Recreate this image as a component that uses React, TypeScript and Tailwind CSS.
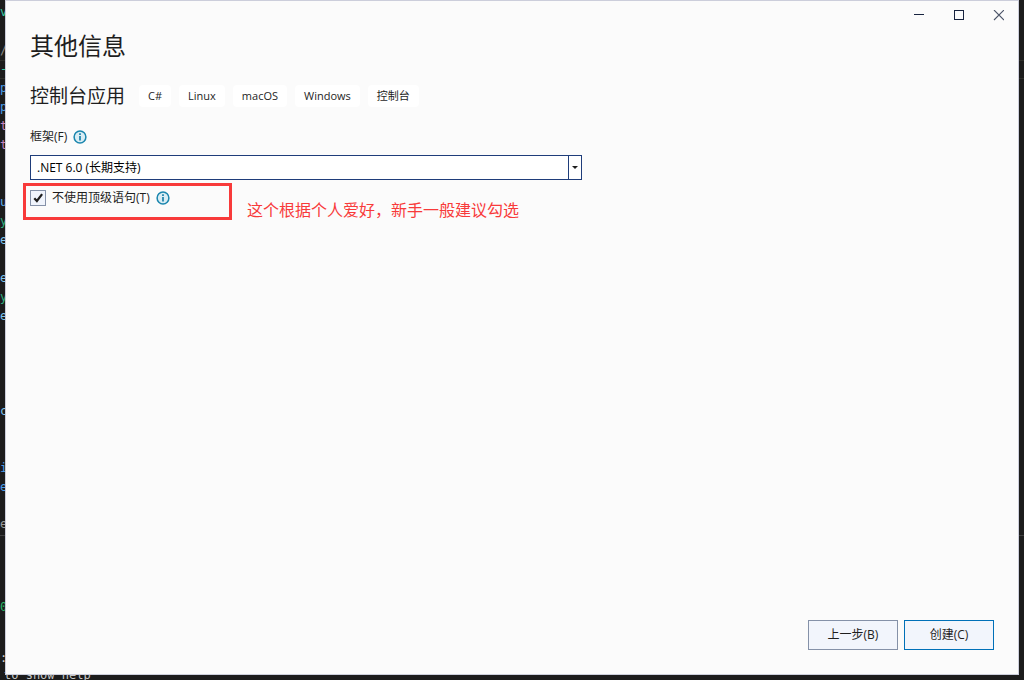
import { useState } from 'react';

const tags = ['C#', 'Linux', 'macOS', 'Windows', '控制台'];

// One entry per editor row, empty rows included
const editorRows: Array<{ text: string; color: string; active?: boolean }> = [
  { text: 'v', color: 'text-[#35c9a5]' },
  { text: '', color: '' },
  { text: '/', color: 'text-[#8a8a8a]' },
  { text: '-', color: 'text-[#35c9a5]', active: true },
  { text: 'p', color: 'text-[#4a9be8]' },
  { text: 'p', color: 'text-[#4a9be8]' },
  { text: 't', color: 'text-[#c583c0]' },
  { text: 't', color: 'text-[#c583c0]' },
  { text: '', color: '' },
  { text: '', color: '' },
  { text: 'u', color: 'text-[#5cb0f0]' },
  { text: 'y', color: 'text-[#2fae80]' },
  { text: 'e', color: 'text-[#7fc4ee]' },
  { text: '', color: '' },
  { text: 'e', color: 'text-[#7fc4ee]' },
  { text: 'y', color: 'text-[#2fae80]' },
  { text: 'e', color: 'text-[#7fc4ee]' },
  { text: '', color: '' },
  { text: '', color: '' },
  { text: '', color: '' },
  { text: '', color: '' },
  { text: 'c', color: 'text-[#7fc4ee]' },
  { text: '', color: '' },
  { text: '', color: '' },
  { text: 'i', color: 'text-[#4a9be8]' },
  { text: 'e', color: 'text-[#4a9be8]' },
];

function InfoIcon() {
  return (
    <svg width="14" height="14" viewBox="0 0 14 14" fill="none" aria-hidden="true">
      <circle cx="7" cy="7" r="5.9" fill="#d9edf4" stroke="#1a86ae" strokeWidth="1.5" />
      <path d="M7 3.2v1.7M7 6v4.6" stroke="#1a7fa8" strokeWidth="1.7" />
    </svg>
  );
}

function Editor() {
  return (
    <div className="flex h-full flex-col overflow-hidden bg-[#1c1c1c] pt-[3px] font-['DejaVu_Sans_Mono',monospace] text-[12px] leading-[19px]">
      {editorRows.map((row, i) => (
        <div
          key={i}
          className={`h-[19px] shrink-0 ${row.color} ${row.active ? 'border-y border-[#2e2e2a] leading-[17px]' : ''}`}
        >
          {row.text}
        </div>
      ))}
      <div className="mt-[18px] h-[21px] shrink-0 border-b border-[#3f3f3f] text-[#9a9a9a]">er</div>
      <div className="mt-[62px] shrink-0 text-[#27b566]">0</div>
      <div className="mt-8 h-[17px] shrink-0 text-[#d0d0d0]">:</div>
      <div className="h-[19px] shrink-0 pl-1 text-[#c8c8c8]">to show help</div>
    </div>
  );
}

function WindowControls() {
  return (
    <div className="flex h-[30px] shrink-0 justify-end">
      <button aria-label="最小化" className="flex w-10 items-center justify-center">
        <svg width="12" height="12" viewBox="0 0 12 12">
          <rect x="2" y="4" width="10" height="1" fill="#17233f" />
        </svg>
      </button>
      <button aria-label="最大化" className="flex w-10 items-center justify-center">
        <svg width="12" height="12" viewBox="0 0 12 12" fill="none">
          <rect x="2.5" y="0.5" width="9" height="9" stroke="#17233f" />
        </svg>
      </button>
      <button aria-label="关闭" className="flex w-10 items-center justify-center">
        <svg width="12" height="12" viewBox="0 0 12 12" fill="none">
          <path d="M2 0l10 10M12 0L2 10" stroke="#4b5468" strokeWidth="1.1" />
        </svg>
      </button>
    </div>
  );
}

export default function App() {
  const [framework, setFramework] = useState('net6');
  const [noTopLevel, setNoTopLevel] = useState(true);

  return (
    <div className="relative h-screen overflow-hidden">
      <Editor />

      <main className="absolute top-0 right-[5px] bottom-[5px] left-[5px] flex flex-col border border-[#cccedb] bg-[#fbfbfb] font-['Open_Sans','Noto_Sans_CJK_SC',sans-serif] text-[12px] text-[#1e1e1e]">
        <WindowControls />

        <div className="flex-1 px-6">
          <h1 className="text-[24px] leading-[30px]">其他信息</h1>

          <div className="mt-[19px] flex items-center gap-[14px]">
            <h2 className="text-[19px] leading-[32px]">控制台应用</h2>
            <ul className="flex gap-2">
              {tags.map((tag) => (
                <li key={tag} className="rounded bg-white px-[9px] text-[11px] leading-[22px]">
                  {tag}
                </li>
              ))}
            </ul>
          </div>

          {/* Framework */}
          <div className="mt-[15px] flex items-center gap-[6px] leading-5">
            <label htmlFor="framework">框架(F)</label>
            <InfoIcon />
          </div>
          <div className="relative mt-2 max-w-[552px]">
            <select
              id="framework"
              value={framework}
              onChange={(e) => setFramework(e.target.value)}
              className="block h-[25px] w-full appearance-none border border-[#1f3d7a] bg-white pl-[6px] text-black outline-none"
            >
              <option value="net6">.NET 6.0 (长期支持)</option>
            </select>
            <span className="pointer-events-none absolute inset-y-0 right-0 flex w-[14px] items-center justify-center border-l border-[#1f3d7a]">
              <svg width="7" height="3" viewBox="0 0 7 3">
                <path d="M0 0h6L3 3z" fill="#1e1e1e" />
              </svg>
            </span>
          </div>

          {/* Top-level statements option */}
          <div className="mt-[3px] -ml-[7px] flex items-end gap-[15px]">
            <div className="flex h-[37px] w-[209px] items-start border-[3px] border-[#f83a3a] px-1 pt-1">
              <label className="flex items-center gap-[6px] leading-4">
                <span className="relative flex">
                  <input
                    type="checkbox"
                    checked={noTopLevel}
                    onChange={(e) => setNoTopLevel(e.target.checked)}
                    className="h-4 w-4 appearance-none border border-[#8591a8] bg-[#f0f4fc]"
                  />
                  {noTopLevel && (
                    <svg
                      width="16"
                      height="16"
                      viewBox="0 0 16 16"
                      fill="none"
                      className="pointer-events-none absolute inset-0"
                    >
                      <path d="M4.3 8.2l2.6 2.8 5.2-6.8" stroke="#1e1e1e" strokeWidth="2.2" />
                    </svg>
                  )}
                </span>
                不使用顶级语句(T)
                <InfoIcon />
              </label>
            </div>
            <p className="text-[16px] leading-5 text-[#f83a3a]">这个根据个人爱好，新手一般建议勾选</p>
          </div>
        </div>

        <div className="flex justify-end gap-[6px] px-6 pb-6">
          <button className="h-[30px] w-[90px] border border-[#8591a8] bg-[#f2f5fc]">上一步(B)</button>
          <button className="h-[30px] w-[90px] border border-[#0070b8] bg-[#f2f5fc]">创建(C)</button>
        </div>
      </main>
    </div>
  );
}
